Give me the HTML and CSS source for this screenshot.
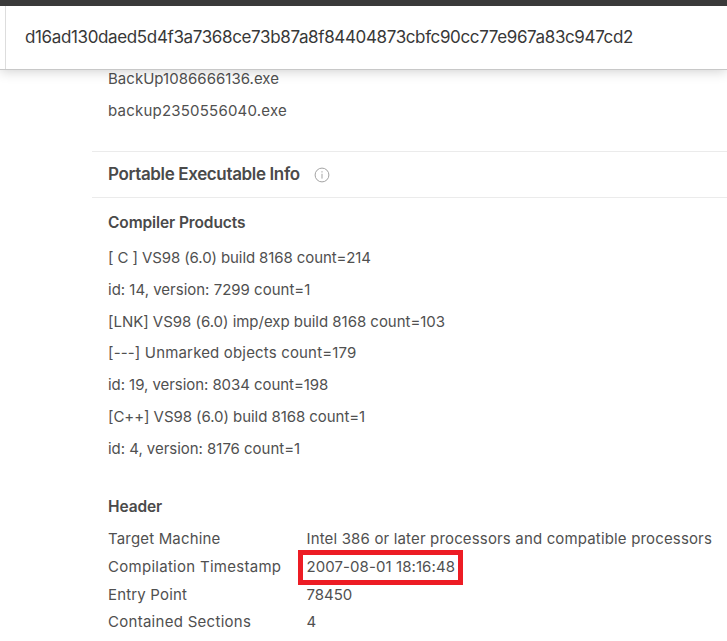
FILE: index.html
```
<!DOCTYPE html>
<html lang="en">
<head>
<meta charset="utf-8">
<title>File details</title>
<link rel="stylesheet" href="styles.css">
</head>
<body>
<header class="topbar">
  <div class="search"><span class="hash">d16ad130daed5d4f3a7368ce73b87a8f84404873cbfc90cc77e967a83c947cd2</span></div>
</header>
<main class="details">
  <ul class="list names">
    <li><span class="t0">BackUp1086666136.exe</span></li>
    <li><span class="t4">backup2350556040.exe</span></li>
  </ul>
  <section class="pe">
    <div class="section-title">
      <h2>Portable Executable Info</h2>
      <svg class="info" viewBox="0 0 16 16" width="16" height="16" fill="none" stroke="#a3a3a3">
        <circle cx="8" cy="8" r="6.9"/>
        <path d="M8 6.8V11.6M8 4.2V5.5"/>
      </svg>
    </div>
    <h3>Compiler Products</h3>
    <ul class="list products">
      <li><span class="n2">[ C ] VS98 (6.0) build 8168 count=214</span></li>
      <li><span>id: 14, version: 7299 count=1</span></li>
      <li><span class="n0">[LNK] VS98 (6.0) imp/exp build 8168 count=103</span></li>
      <li><span class="t3">[---] Unmarked objects count=179</span></li>
      <li><span class="n1">id: 19, version: 8034 count=198</span></li>
      <li><span class="n1">[C++] VS98 (6.0) build 8168 count=1</span></li>
      <li><span class="n0">id: 4, version: 8176 count=1</span></li>
    </ul>
    <h3 class="header-title">Header</h3>
    <dl class="facts">
      <dt class="t3">Target Machine</dt><dd class="t2">Intel 386 or later processors and compatible processors</dd>
      <dt class="t5">Compilation Timestamp</dt><dd><span class="marked t1">2007-08-01 18:16:48</span></dd>
      <dt class="t3">Entry Point</dt><dd>78450</dd>
      <dt class="t5">Contained Sections</dt><dd>4</dd>
    </dl>
  </section>
</main>
</body>
</html>
```
FILE: styles.css
```
* { box-sizing: border-box; margin: 0; padding: 0; }
body {
  width: 727px;
  height: 641px;
  overflow: hidden;
  background: #fff;
  color: #505050;
  font: 400 15px "Inter", "Liberation Sans", sans-serif;
}
.topbar {
  position: relative;
  z-index: 1;
  height: 70px;
  border-top: 6px solid #3a3a3a;
  border-bottom: 1px solid #c8c8c8;
  background: #fff;
  box-shadow: 0 1px 12px rgba(0, 0, 0, .2);
}
.search {
  height: 63px;
  margin-left: 5px;
  padding-left: 19px;
  border-left: 1px solid #ddd;
  line-height: 62px;
}
.hash { font-size: 17px; letter-spacing: -.364px; color: #383838; white-space: nowrap; }
.details { padding-left: 92px; }
.list { list-style: none; padding-left: 16px; }
.list li { height: 31.8px; line-height: 31.8px; white-space: nowrap; }
.names { margin-top: -7.2px; height: 88.2px; }
.section-title {
  display: flex;
  align-items: center;
  height: 47px;
  padding-left: 16px;
  border: solid #ebebeb;
  border-width: 1px 0;
}
h2, h3 { font-weight: 600; color: #4a4a4a; }
h2 { font-size: 17px; width: 206px; line-height: 45px; letter-spacing: -.36px; white-space: nowrap; }
.info { margin-top: 1px; }
h3 { padding-left: 16px; font-size: 15.5px; height: 44px; line-height: 50px; letter-spacing: -.1px; }
.products { height: 244px; }
.header-title { height: 39px; line-height: 42px; }
.facts {
  display: grid;
  grid-template-columns: 198.5px 1fr;
  grid-auto-rows: 27.8px;
  padding-left: 16px;
  line-height: 27.8px;
  white-space: nowrap;
}
.marked { position: relative; }
.marked::before {
  content: "";
  position: absolute;
  inset: -7px -8px -9px -9px;
  border: 5px solid #ed1c24;
}
.n2 { letter-spacing: -.1px; }
.n1 { letter-spacing: -.06px; }
.n0 { letter-spacing: -.03px; }
.t0 { letter-spacing: .03px; }
.t1 { letter-spacing: .08px; }
.t2 { letter-spacing: .157px; }
.t3 { letter-spacing: .165px; }
.t4 { letter-spacing: .215px; }
.t5 { letter-spacing: .28px; }
```
